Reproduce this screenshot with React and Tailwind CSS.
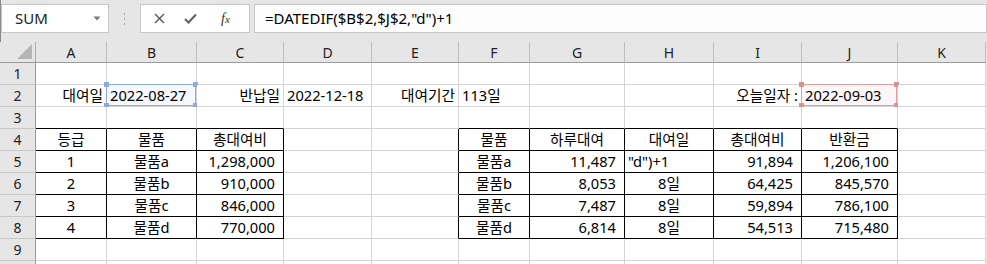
import React from "react";

const FONT = { fontFamily: '"Noto Sans", "Noto Sans CJK KR", sans-serif' };
const COLS = ["A", "B", "C", "D", "E", "F", "G", "H", "I", "J", "K"];

const inT = (r, c) =>
  (r >= 4 && r <= 8 && c >= 0 && c <= 2) || (r >= 4 && r <= 8 && c >= 5 && c <= 9);

const data = {
  "2-0": ["대여일", "r"],
  "2-1": ["2022-08-27", "l"],
  "2-2": ["반납일", "r"],
  "2-3": ["2022-12-18", "l"],
  "2-4": ["대여기간", "r"],
  "2-5": ["113일", "l"],
  "2-8": ["오늘일자 :", "r"],
  "2-9": ["2022-09-03", "l"],
  "4-0": ["등급", "c"],
  "4-1": ["물품", "c"],
  "4-2": ["총대여비", "c"],
  "4-5": ["물품", "c"],
  "4-6": ["하루대여", "c"],
  "4-7": ["대여일", "c"],
  "4-8": ["총대여비", "c"],
  "4-9": ["반환금", "c"],
};
const t1 = [
  ["1", "물품a", "1,298,000"],
  ["2", "물품b", "910,000"],
  ["3", "물품c", "846,000"],
  ["4", "물품d", "770,000"],
];
const t2 = [
  ["물품a", "11,487", '"d")+1', "91,894", "1,206,100"],
  ["물품b", "8,053", "8일", "64,425", "845,570"],
  ["물품c", "7,487", "8일", "59,894", "786,100"],
  ["물품d", "6,814", "8일", "54,513", "715,480"],
];
t1.forEach((row, i) => {
  data[`${5 + i}-0`] = [row[0], "c"];
  data[`${5 + i}-1`] = [row[1], "c"];
  data[`${5 + i}-2`] = [row[2], "n"];
});
t2.forEach((row, i) => {
  data[`${5 + i}-5`] = [row[0], "c"];
  data[`${5 + i}-6`] = [row[1], "n"];
  data[`${5 + i}-7`] = [row[2], i === 0 ? "l" : "c"];
  data[`${5 + i}-8`] = [row[3], "n"];
  data[`${5 + i}-9`] = [row[4], "n"];
});

function Handles({ color }) {
  const h = `absolute w-[5px] h-[5px] ${color}`;
  return (
    <>
      <span className={`${h} -left-[3px] -top-[3px]`} />
      <span className={`${h} -right-[3px] -top-[3px]`} />
      <span className={`${h} -left-[3px] -bottom-[3px]`} />
      <span className={`${h} -right-[3px] -bottom-[3px]`} />
    </>
  );
}

function Cell({ r, c }) {
  const rightBlack = inT(r, c) || inT(r, c + 1);
  const bottomBlack = inT(r, c) || inT(r + 1, c);
  const d = data[`${r}-${c}`];
  const align = d ? d[1] : "l";
  const alignCls =
    align === "r"
      ? "justify-end pr-[3px]"
      : align === "n"
      ? "justify-end pr-[8px]"
      : align === "c"
      ? "justify-center"
      : "justify-start pl-[3px]";
  const bg = r === 2 && c === 1 ? "bg-[#f5f8fd]" : r === 2 && c === 9 ? "bg-[#fdf6f6]" : "bg-white";
  return (
    <div
      className={`relative flex items-center whitespace-nowrap text-[14.67px] text-black border-r border-b ${
        rightBlack ? "border-r-black" : "border-r-[#d4d4d4]"
      } ${bottomBlack ? "border-b-black" : "border-b-[#d4d4d4]"} ${alignCls} ${bg}`}
    >
      {d ? <span className="leading-none">{d[0]}</span> : null}
      {r === 2 && c === 1 && (
        <div className="absolute -left-[1px] -top-[1px] right-0 bottom-0 border border-[#8eaadb] pointer-events-none">
          <Handles color="bg-[#8eaadb]" />
        </div>
      )}
      {r === 2 && c === 9 && (
        <div className="absolute -left-[1px] -top-[1px] right-0 bottom-0 border border-[#dca0a0] pointer-events-none">
          <Handles color="bg-[#d79393]" />
        </div>
      )}
    </div>
  );
}

export default function App() {
  const rows = [1, 2, 3, 4, 5, 6, 7, 8, 9, 10];
  return (
    <div className="w-[987px] h-[264px] overflow-hidden bg-[#e6e6e6]" style={FONT}>
      {/* formula bar */}
      <div className="h-[42px] flex items-start pt-[4px] border-l border-[#8a8a8a]">
        <div className="w-[108px] h-[29px] bg-white border border-[#c6c6c6] flex items-center justify-between pl-[13px] pr-[7px]">
          <span className="text-[15px] text-[#222] leading-none">SUM</span>
          <svg width="8" height="5" viewBox="0 0 8 5">
            <path d="M0.5 0.5 L7.5 0.5 L4 4.5 Z" fill="#7a7a7a" />
          </svg>
        </div>
        <div className="w-[31px] h-[29px] flex items-center justify-center">
          <svg width="3" height="12" viewBox="0 0 3 12">
            <rect x="1" y="0" width="1" height="2" fill="#a8a8a8" />
            <rect x="1" y="5" width="1" height="2" fill="#a8a8a8" />
            <rect x="1" y="10" width="1" height="2" fill="#a8a8a8" />
          </svg>
        </div>
        <div className="w-[110px] h-[29px] bg-white border border-[#c6c6c6] flex items-center pl-[13px] gap-[19px]">
          <svg width="11" height="11" viewBox="0 0 11 11">
            <path d="M1 1 L10 10 M10 1 L1 10" stroke="#555" strokeWidth="1.4" fill="none" />
          </svg>
          <svg width="13" height="11" viewBox="0 0 13 11">
            <path d="M1 6 L4.5 9.5 L12 1.5" stroke="#666" strokeWidth="2.2" fill="none" />
          </svg>
          <span
            className="text-[14px] italic text-[#333] leading-none ml-[5px]"
            style={{ fontFamily: '"Liberation Serif", serif' }}
          >
            f<span className="text-[11px]">x</span>
          </span>
        </div>
        <div className="ml-[4px] flex-1 h-[29px] bg-[#fdfdfd] border border-[#c6c6c6] flex items-center pl-[10px]">
          <span className="text-[15px] text-black leading-none">=DATEDIF($B$2,$J$2,"d")+1</span>
        </div>
      </div>

      {/* grid */}
      <div className="grid grid-cols-[36px_71px_90px_87px_88px_87px_71px_95px_89px_88px_96px_88px] grid-rows-[21px_repeat(10,22px)]">
        <div className="relative bg-[#e6e6e6] border-r border-b border-r-[#ababab] border-b-[#9b9b9b]">
          <svg className="absolute right-[3px] bottom-[3px]" width="15" height="15" viewBox="0 0 15 15">
            <path d="M15 0 L15 15 L0 15 Z" fill="#b5b5b5" />
          </svg>
        </div>
        {COLS.map((l) => (
          <div
            key={l}
            className="flex items-center justify-center bg-[#e6e6e6] border-b border-b-[#9b9b9b] border-r border-r-[#bdbdbd] text-[14px] text-[#222]"
          >
            {l}
          </div>
        ))}
        {rows.map((r) => (
          <React.Fragment key={r}>
            <div className="flex items-center justify-center bg-[#e6e6e6] border-r border-r-[#9b9b9b] border-b border-b-[#c8c8c8] text-[14px] text-[#222]">
              {r < 10 ? r : null}
            </div>
            {COLS.map((_, c) => (
              <Cell key={c} r={r} c={c} />
            ))}
          </React.Fragment>
        ))}
      </div>
    </div>
  );
}
